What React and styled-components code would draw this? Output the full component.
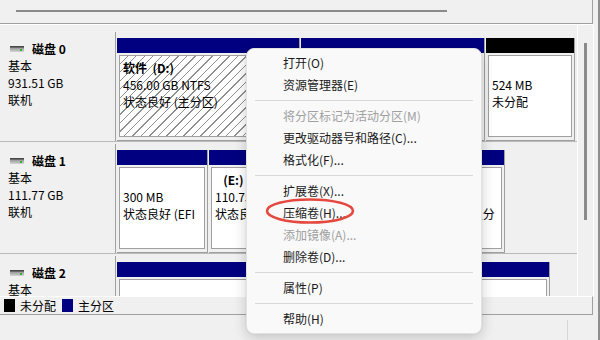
import React from 'react';
import styled, { createGlobalStyle } from 'styled-components';

const GlobalStyle = createGlobalStyle`
  *, *::before, *::after { box-sizing: border-box; }
  html, body { margin: 0; padding: 0; background: #f0f0f0; }
  body {
    font-family: "Noto Sans CJK SC", "Noto Sans", sans-serif;
    font-size: 12px;
    color: #000;
  }
`;

const Window = styled.div`
  position: relative;
  width: 600px;
  height: 340px;
  overflow: hidden;
  background: #f0f0f0;
  border-right: 2px solid #8e8e8e;
  display: flex;
  flex-direction: column;
`;

const TopPane = styled.div`
  flex: none;
  width: 593px;
  height: 24px;
  margin-bottom: 1px;
  padding: 10px 0 0 16px;
  border-right: 1px solid #a0a0a0;
  border-bottom: 1px solid #a0a0a0;
  box-shadow: 0 1px 0 #ffffff;
`;

const HThumb = styled.div`
  width: 431px;
  height: 2px;
  background: #8a8a8a;
`;

const Middle = styled.div`
  flex: none;
  height: 271px;
  display: flex;
`;

const DiskList = styled.div`
  width: 577px;
  flex: none;
  overflow: hidden;
  padding-top: 7px;
  display: flex;
  flex-direction: column;
  gap: 2px;
`;

const DiskRow = styled.div`
  flex: none;
  height: 110px;
  display: flex;
  border-bottom: 1px solid #b9b9b9;
`;

const DiskLabel = styled.div`
  width: 116px;
  flex: none;
  padding: 8px 0 0 8px;
  line-height: 17px;
  border-right: 1px solid #a0a0a0;
  white-space: nowrap;
`;

const DiskTitle = styled.div`
  display: flex;
  align-items: center;
  gap: 8px;
  padding-left: 2px;
  font-weight: bold;
`;

const DiskMap = styled.div`
  flex: 1;
  display: flex;
  gap: 1px;
  padding: 6px 0 0 1px;
`;

const Partition = styled.div`
  flex: none;
  width: ${p => p.$w}px;
  display: flex;
  flex-direction: column;
  padding-bottom: 3px;
  border-right: 1px solid #a0a0a0;
  border-bottom: 1px solid #a0a0a0;
`;

const PartHeader = styled.div`
  flex: none;
  height: 15px;
  background: ${p => p.$color};
`;

const PartBody = styled.div`
  flex: 1;
  margin: 2px 2px 0;
  border: 1px solid #a0a0a0;
  padding: 3px 6px 0 3px;
  line-height: 17px;
  white-space: pre;
  overflow: hidden;
  background: ${p => p.$selected
    ? 'repeating-linear-gradient(135deg, #ffffff 0 5px, #8f8f8f 5px 6px)'
    : '#ffffff'};
`;

const Line = styled.div`
  height: 17px;
  overflow: hidden;
  font-weight: ${p => (p.$bold ? 'bold' : 'normal')};
`;

const VScroll = styled.div`
  width: 16px;
  flex: none;
  border-left: 1px solid #ffffff;
  padding-top: 18px;
  display: flex;
  justify-content: center;
`;

const VThumb = styled.div`
  width: 3px;
  height: 177px;
  background: #8a8a8a;
`;

const RightEdge = styled.div`
  width: 5px;
  flex: none;
  border-left: 1px solid #ffffff;
`;

const Legend = styled.div`
  flex: none;
  width: 593px;
  height: 19px;
  display: flex;
  align-items: center;
  padding-left: 4px;
  border-top: 1px solid #ffffff;
  border-right: 1px solid #a0a0a0;
  border-bottom: 1px solid #a0a0a0;
`;

const Swatch = styled.span`
  width: 11px;
  height: 13px;
  background: ${p => p.$color};
  margin-right: 5px;
`;

const LegendText = styled.span`
  margin-right: 6px;
  line-height: 17px;
`;

const StatusBar = styled.div`
  flex: 1;
  display: flex;
  justify-content: flex-end;
  padding-top: 5px;
`;

const StatusDivider = styled.div`
  width: 1px;
  background: #d6d6d6;
  margin-right: 30px;
`;

const Menu = styled.div`
  position: absolute;
  left: 246px;
  top: 48px;
  width: 236px;
  padding: 3px 4px;
  background: #f9f9f9;
  border: 1px solid #e2e2e2;
  border-radius: 8px;
  box-shadow: 0 4px 14px rgba(0, 0, 0, 0.18), 0 0 2px rgba(0, 0, 0, 0.08);
`;

const MenuItem = styled.div`
  height: 22px;
  line-height: 22px;
  padding-left: 32px;
  white-space: nowrap;
  color: ${p => (p.$disabled ? '#a0a0a0' : '#1a1a1a')};
`;

const MenuSep = styled.div`
  height: 1px;
  margin: 4px 4px;
  background: #d8d8d8;
`;

const Highlight = styled.svg`
  position: absolute;
  left: 265px;
  top: 198px;
  overflow: visible;
`;

const DiskIcon = () => (
  <svg width="14" height="6" viewBox="0 0 14 6">
    <defs>
      <linearGradient id="dk" x1="0" y1="0" x2="0" y2="1">
        <stop offset="0" stopColor="#5a5a5a" />
        <stop offset="0.35" stopColor="#9c9c9c" />
        <stop offset="1" stopColor="#d4d4d4" />
      </linearGradient>
    </defs>
    <rect x="0" y="0" width="14" height="6" rx="1" fill="url(#dk)" />
    <rect x="0" y="0" width="14" height="1.5" fill="#4a4a4a" />
    <rect x="10" y="3" width="2" height="2" fill="#2fb82f" />
  </svg>
);

const disks = [
  {
    name: '磁盘 0', size: '931.51 GB',
    parts: [
      { w: 183, color: '#000080', selected: true, lines: [['软件  (D:)', true], ['456.00 GB NTFS'], ['状态良好 (主分区)']] },
      { w: 184, color: '#000080', lines: [['文档  (F:)', true], ['475.00 GB NTFS'], ['状态良好 (主分区)']] },
      { w: 89, color: '#000000', lines: [[''], ['524 MB'], ['未分配']] },
    ],
  },
  {
    name: '磁盘 1', size: '111.77 GB',
    parts: [
      { w: 91, color: '#000080', lines: [[''], ['300 MB'], ['状态良好 (EFI 系统分区)']] },
      { w: 188, color: '#000080', lines: [['   (E:)', true], ['110.75 GB NTFS'], ['状态良好 (启动, 页面文件)']] },
      { w: 107, color: '#000080', lines: [[''], ['  720 MB'], ['状态良好 (恢复分区)']] },
    ],
  },
  {
    name: '磁盘 2', size: '1863.00 GB',
    parts: [
      { w: 433, color: '#000080', lines: [[''], ['1863.00 GB NTFS'], ['状态良好 (主分区)']] },
    ],
  },
];

const menu = [
  ['打开(O)'], ['资源管理器(E)'], 'sep',
  ['将分区标记为活动分区(M)', true], ['更改驱动器号和路径(C)...'], ['格式化(F)...'], 'sep',
  ['扩展卷(X)...'], ['压缩卷(H)...'], ['添加镜像(A)...', true], ['删除卷(D)...'], 'sep',
  ['属性(P)'], 'sep',
  ['帮助(H)'],
];

export default function App() {
  return (
    <>
      <GlobalStyle />
      <Window>
        <TopPane><HThumb /></TopPane>
        <Middle>
          <DiskList>
            {disks.map(d => (
              <DiskRow key={d.name}>
                <DiskLabel>
                  <DiskTitle><DiskIcon />{d.name}</DiskTitle>
                  <div>基本</div>
                  <div>{d.size}</div>
                  <div>联机</div>
                </DiskLabel>
                <DiskMap>
                  {d.parts.map((p, i) => (
                    <Partition key={i} $w={p.w}>
                      <PartHeader $color={p.color} />
                      <PartBody $selected={p.selected}>
                        {p.lines.map((l, j) => (
                          <Line key={j} $bold={l[1]}>{l[0]}</Line>
                        ))}
                      </PartBody>
                    </Partition>
                  ))}
                </DiskMap>
              </DiskRow>
            ))}
          </DiskList>
          <VScroll><VThumb /></VScroll>
          <RightEdge />
        </Middle>
        <Legend>
          <Swatch $color="#000000" /><LegendText>未分配</LegendText>
          <Swatch $color="#000080" /><LegendText>主分区</LegendText>
        </Legend>
        <StatusBar><StatusDivider /></StatusBar>

        <Menu>
          {menu.map((m, i) =>
            m === 'sep'
              ? <MenuSep key={i} />
              : <MenuItem key={i} $disabled={m[1]}>{m[0]}</MenuItem>
          )}
        </Menu>
        <Highlight width="90" height="26" viewBox="0 0 90 26">
          <ellipse cx="45" cy="13" rx="43" ry="11.5" fill="none" stroke="#e5483f" strokeWidth="2.6" />
        </Highlight>
      </Window>
    </>
  );
}
